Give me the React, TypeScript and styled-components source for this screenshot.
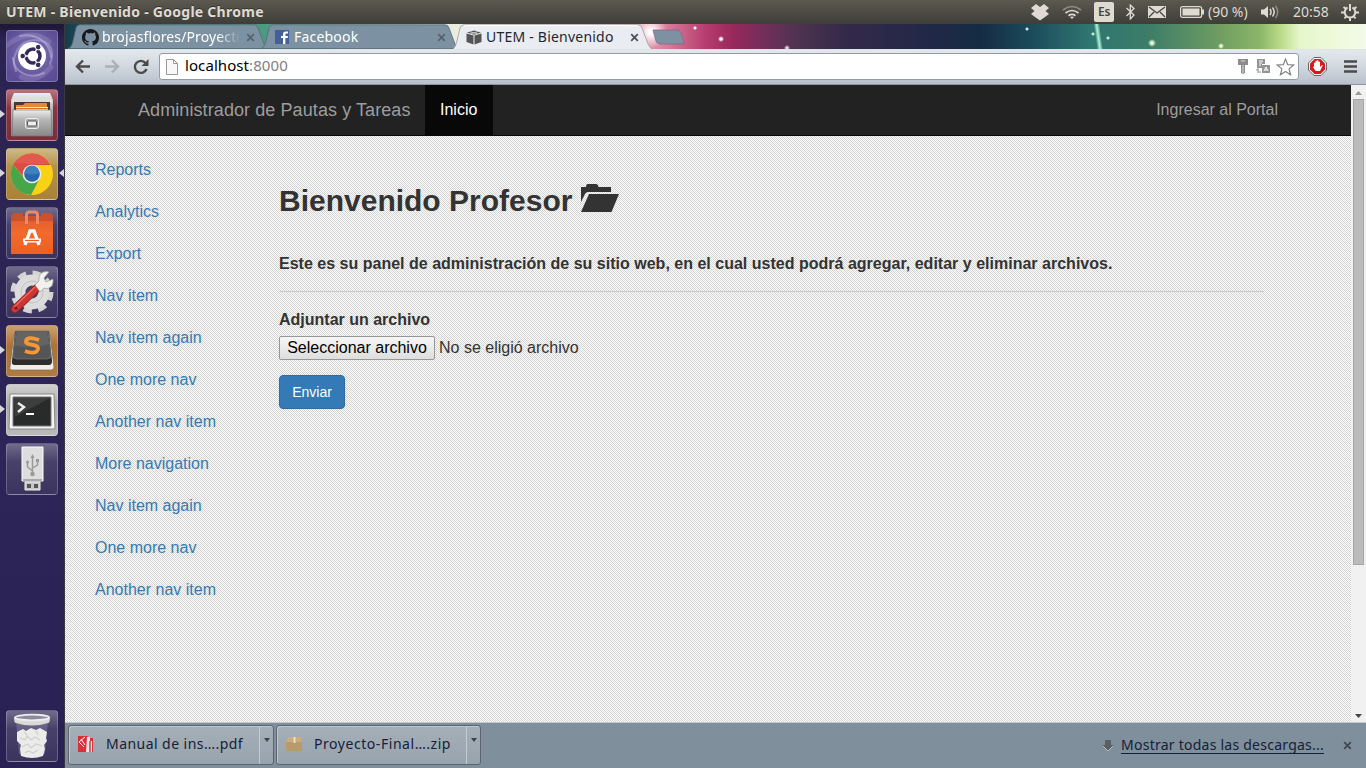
import React from "react";
import styled, { createGlobalStyle } from "styled-components";

const ui = `"Noto Sans", "Open Sans", sans-serif`;
const web = `"Liberation Sans", Arial, sans-serif`;

const Global = createGlobalStyle`
  * { box-sizing: border-box; }
  html, body, #root { margin: 0; height: 100%; }
  body { overflow: hidden; background: #2a2350; }
`;

const Desktop = styled.div`
  width: 1366px;
  height: 768px;
  display: flex;
  flex-direction: column;
  font-family: ${ui};
`;

const SystemBar = styled.header`
  height: 24px;
  flex: none;
  display: flex;
  justify-content: space-between;
  align-items: center;
  padding: 0 7px 0 6px;
  background: linear-gradient(#5c5a50, #55534a 20%, #3e3d38);
  color: #dfdbd2;
`;
const Label = styled.span<{ $size?: number; $space?: number; $w?: number }>`
  font-size: ${(p) => p.$size ?? 14}px;
  letter-spacing: ${(p) => p.$space ?? 0}px;
  ${(p) => (p.$w ? `width: ${p.$w}px;` : "")}
  line-height: 20px;
  white-space: nowrap;
  flex: none;
`;
const WindowTitle = styled(Label)`
  font-weight: 700;
  text-shadow: 0 -1px #33322e;
`;
const Indicators = styled.div`
  display: flex;
  align-items: center;
  height: 24px;
`;
const Indicator = styled.svg<{ $gap: number }>`
  display: block;
  flex: none;
  margin-right: ${(p) => p.$gap}px;
`;
const Keyboard = styled.span`
  width: 20px;
  height: 20px;
  margin-right: 12px;
  border-radius: 2px;
  background: #dfdbd2;
  color: #45443e;
  font-size: 12px;
  font-weight: 600;
  line-height: 20px;
  text-align: center;
  letter-spacing: -0.3px;
`;

const Workspace = styled.div`
  flex: 1;
  display: flex;
  min-height: 0;
`;

const Launcher = styled.nav`
  width: 65px;
  flex: none;
  display: flex;
  flex-direction: column;
  gap: 7px;
  padding: 6px 0 6px 6px;
  background: linear-gradient(#1f1738, #2b2350 16px, #2d2557 60%, #292154);
  border-right: 1px solid #3b3844;
`;
const Tile = styled.div<{ $bg: string; $last?: boolean }>`
  position: relative;
  width: 52px;
  height: 52px;
  flex: none;
  border-radius: 4px;
  border: 1px solid rgba(255, 255, 255, 0.22);
  background: ${(p) => p.$bg};
  ${(p) => (p.$last ? "margin-top: auto;" : "")}
  & > svg { display: block; }
`;
const Arrow = styled.i<{ $side: "left" | "right" }>`
  position: absolute;
  top: 20px;
  ${(p) => (p.$side === "left" ? "left: -7px;" : "right: -7px;")}
  border: 4px solid transparent;
  ${(p) =>
    p.$side === "left"
      ? "border-left: 5px solid #d8d6de; border-right: 0;"
      : "border-right: 5px solid #d8d6de; border-left: 0;"}
`;

const Browser = styled.main`
  flex: 1;
  min-width: 0;
  display: flex;
  flex-direction: column;
`;

const TabStrip = styled.div`
  height: 25px;
  flex: none;
  display: flex;
  padding-left: 3px;
  background:
    radial-gradient(circle at 586px 8px, #fff 0 2px, transparent 16px),
    radial-gradient(circle at 630px 4px, #fff 0 1px, transparent 2px),
    radial-gradient(circle at 656px 15px, #fff 0 1px, transparent 3px),
    radial-gradient(circle at 722px 24px, #e9cbe0 0 1px, transparent 3px),
    radial-gradient(circle at 1087px 19px, #eaffda 0 1px, transparent 4px),
    radial-gradient(circle at 962px 5px, #c5e8e4 0 1px, transparent 2px),
    radial-gradient(circle at 1028px 10px, #c5e8d4 0 1px, transparent 2px),
    radial-gradient(circle at 1043px 14px, #c5e8d4 0 1px, transparent 2px),
    radial-gradient(circle at 1156px 22px, #f0ffd8 0 1px, transparent 3px),
    linear-gradient(82deg, transparent 1022px, #7fd0b5 1024px, #b4f0d8 1025px, transparent 1028px),
    linear-gradient(90deg, #163c4c 0, #2f6f68 60px, #4c9a80 200px, #e8efdc 390px, #f4c9cf 540px, #dc87a2 596px, #b83d70 640px, #98285b 668px, #6b3059 705px, #4c3350 735px, #33294a 780px, #252848 850px, #142b43 915px, #1b4a5b 965px, #2f7670 1025px, #3d7d68 1085px, #6c9a62 1150px, #8cb668 1195px, #b9da86 1215px, #e6f7cc 1235px, #f4fbe9 1301px);
`;
const TabBox = styled.div<{ $w: number; $active?: boolean }>`
  position: relative;
  width: ${(p) => p.$w}px;
  height: 25px;
  margin-right: -8px;
  z-index: ${(p) => (p.$active ? 2 : 1)};
  display: flex;
  align-items: center;
  flex: none;
  padding: 1px 14px 0 14px;
  color: ${(p) => (p.$active ? "#1f2533" : "#fff")};
  & > * { position: relative; }
  & > svg:first-child { position: absolute; left: 0; top: 0; }
`;
const TabText = styled(Label)<{ $fade?: boolean; $lead: number }>`
  flex: 1 1 0;
  min-width: 0;
  overflow: hidden;
  margin-left: ${(p) => p.$lead}px;
  ${(p) => (p.$fade ? "mask-image: linear-gradient(90deg, #000 115px, transparent 138px);" : "")}
`;
const NewTab = styled.svg`
  display: block;
  margin: 5px 0 0 7px;
`;

const Toolbar = styled.div`
  height: 36px;
  flex: none;
  display: flex;
  align-items: center;
  padding: 0 7px 1px 10px;
  border-top: 1px solid #dfe4e8;
  border-bottom: 1px solid #8d949b;
  background: linear-gradient(#e4e8ed, #d3d9e1 45%, #b8c1cc);
`;
const ToolIcon = styled.svg<{ $gap?: number }>`
  display: block;
  flex: none;
  margin-right: ${(p) => p.$gap ?? 0}px;
`;
const BlockerIcon = styled(ToolIcon)`
  margin-left: 9px;
`;
const Omnibox = styled.div`
  width: 1140px;
  height: 27px;
  display: flex;
  align-items: center;
  padding: 0 3px 0 6px;
  border: 1px solid #939ba5;
  border-radius: 3px;
  background: #fff;
`;
const Address = styled(Label)`
  flex: 1;
  padding-bottom: 3px;
  color: #808080;
  & b { font-weight: 400; color: #000; }
`;

const Viewport = styled.div`
  flex: 1;
  min-height: 0;
  display: flex;
`;
const Page = styled.div`
  flex: 1;
  font-family: ${web};
  font-size: 16px;
  line-height: 22px;
  color: #333;
  background-color: #fff;
  background-image:
    conic-gradient(transparent 25%, rgba(255, 255, 255, 0.3) 0 50%, transparent 0 75%, rgba(255, 255, 255, 0.3) 0),
    conic-gradient(#fbfbfb 25%, #cfcfcf 0 50%, #fbfbfb 0 75%, #cfcfcf 0);
  background-size: 4px 4px, 2px 2px;
`;
const NavBar = styled.div`
  height: 51px;
  display: flex;
  align-items: stretch;
  padding: 0 58px;
  background: #222;
  border-bottom: 1px solid #080808;
  color: #9d9d9d;
`;
const Brand = styled.a`
  width: 302px;
  padding: 14px 0 14px 15px;
  font-size: 18px;
  letter-spacing: 0.085px;
  white-space: nowrap;
`;
const NavLink = styled.a<{ $active?: boolean }>`
  padding: 14px 15px;
  ${(p) => (p.$active ? "width: 68px; color: #fff; background: #080808;" : "margin-left: auto;")}
`;
const Columns = styled.div`
  display: flex;
`;
const SideNav = styled.ul`
  width: 199px;
  flex: none;
  margin: 0;
  padding: 13px 0 0 15px;
  list-style: none;
`;
const SideItem = styled.li`
  height: 42px;
  padding: 10px 15px;
  color: #337ab7;
  white-space: nowrap;
`;
const Content = styled.section`
  width: 1000px;
  padding: 48px 0 0 15px;
`;
const Heading = styled.h2`
  display: flex;
  margin: 0;
  height: 34px;
  font-size: 30px;
  line-height: 34px;
  font-weight: 700;
  & svg { margin-left: 9px; }
`;
const Intro = styled.p`
  margin: 35px 0 16px;
  font-weight: 700;
  letter-spacing: 0.01px;
`;
const Rule = styled.hr`
  margin: 0 0 17px;
  border: 0;
  border-top: 1px solid #c8c8c8;
`;
const FieldLabel = styled.label`
  display: block;
  font-weight: 700;
`;
const FileRow = styled.div`
  display: flex;
  align-items: center;
  margin: 5px 0 15px;
  gap: 4px;
`;
const FileButton = styled.button`
  width: 156px;
  height: 24px;
  padding: 0;
  font: 16px/20px ${web};
  color: #000;
  border: 1px solid #979797;
  border-radius: 2px;
  background: linear-gradient(#f6f6f6, #dedede);
`;
const Submit = styled.button`
  display: block;
  width: 66px;
  height: 34px;
  padding: 0;
  font: 14px/20px ${web};
  color: #fff;
  background: #337ab7;
  border: 1px solid #2e6da4;
  border-radius: 4px;
`;

const Scroll = styled.div`
  width: 15px;
  flex: none;
  display: flex;
  flex-direction: column;
  padding: 0 1px;
  background: #f1f1f1;
  & svg { display: block; }
`;
const Thumb = styled.div`
  height: 466px;
  margin: 0 1px auto;
  width: 11px;
  background: #bbb;
  border: 1px solid #a5a5a5;
`;

const Downloads = styled.footer`
  height: 46px;
  flex: none;
  display: flex;
  align-items: center;
  gap: 2px;
  padding: 0 14px 1px 3px;
  border-top: 1px solid #c5c9cc;
  background: #7f8f9b;
  color: #172038;
`;
const DownloadItem = styled.div<{ $w: number }>`
  width: ${(p) => p.$w}px;
  height: 40px;
  display: flex;
  border: 1px solid #5b6670;
  border-radius: 3px;
  background: linear-gradient(#a5afb8, #98a3ad);
  box-shadow: inset 1px 1px #bfc7ce;
`;
const DownloadMain = styled.div`
  flex: 1;
  display: flex;
  align-items: center;
  padding: 0 0 2px 9px;
  gap: 11px;
`;
const DownloadMenu = styled.div`
  width: 14px;
  padding: 12px 0 0 4px;
  border-left: 1px solid #c3cad0;
  & svg { display: block; }
`;
const ShowAll = styled(Label)`
  margin-left: 4px;
  border-bottom: 1px solid #172038;
  line-height: 16px;
`;
const DownloadArrow = styled.svg`
  display: block;
  margin-left: auto;
`;
const Dismiss = styled.span`
  margin-left: 17px;
  line-height: 0;
`;

const Close = ({ color }: { color: string }) => (
  <svg width="9" height="9" viewBox="0 0 9 9">
    <path d="M1.2 1.2 7.8 7.8M7.8 1.2 1.2 7.8" stroke={color} strokeWidth="1.8" />
  </svg>
);

type TabProps = { w: number; title: string; icon: React.ReactNode; active?: boolean; fade?: boolean; space?: number; lead?: number };
const Tab = ({ w, title, icon, active, fade, space, lead = 5 }: TabProps) => (
  <TabBox $w={w} $active={active}>
    <svg width={w} height="25">
      <path
        d={`M0 ${active ? 26 : 24.5}Q3 24 4.5 19L8 4Q9 .8 12 .8H${w - 15}Q${w - 12} .8 ${w - 11} 4L${w - 5} 20Q${w - 3} 24 ${w} ${active ? 26 : 24.5}Z`}
        fill={active ? "#e9edf1" : "#7c92a3"}
        stroke={active ? "#a4959f" : "#536976"}
        strokeWidth=".8"
      />
      {active && <path d={`M12 1.6H${w - 15}`} stroke="#fff" />}
    </svg>
    {icon}
    <TabText $fade={fade} $space={space} $lead={lead}>{title}</TabText>
    <Close color={active ? "#4d5157" : "#56636d"} />
  </TabBox>
);

const GitHubIcon = () => (
  <svg width="17" height="17" viewBox="0 0 16 16">
    <path fill="#17191c" d="M8 0C3.58 0 0 3.58 0 8c0 3.54 2.29 6.53 5.47 7.59.4.07.55-.17.55-.38v-1.49c-2.01.37-2.53-.49-2.69-.94-.09-.23-.48-.94-.82-1.13-.28-.15-.68-.52-.01-.53.63-.01 1.08.58 1.23.82.72 1.21 1.87.87 2.33.66.07-.52.28-.87.51-1.07-1.78-.2-3.64-.89-3.64-3.95 0-.87.31-1.59.82-2.15-.08-.2-.36-1.02.08-2.12 0 0 .67-.21 2.2.82a7.4 7.4 0 0 1 4 0c1.53-1.04 2.2-.82 2.2-.82.44 1.1.16 1.92.08 2.12.51.56.82 1.27.82 2.15 0 3.07-1.87 3.75-3.65 3.95.29.25.54.73.54 1.48v2.2c0 .21.15.46.55.38A8 8 0 0 0 16 8c0-4.42-3.58-8-8-8Z" />
  </svg>
);
const FacebookIcon = () => (
  <svg width="14" height="14" viewBox="0 0 14 14">
    <path fill="#43609c" d="M0 0h14v14H0z" />
    <path fill="#fff" d="M8 14V8H6V6h2V4.3C8 2.5 9 1.6 10.7 1.6H13v2h-1.5c-.9 0-1.1.4-1.1 1.1V6H13l-.3 2h-2.3v6z" />
  </svg>
);
const CubeIcon = () => (
  <svg width="16" height="15" viewBox="0 0 16 15">
    <path fill="#555" d="m.5 3.6 7 2v9L.5 12zM8.5 5.6l7-2V12l-7 2.6zM8 .5l7 2.1-7 2.2-7-2.2z" />
    <path d="m4 1.8 7.2 2M4.8 3.8 12 1.6" stroke="#ddd" strokeWidth=".8" />
  </svg>
);

const UbuntuIcon = () => (
  <svg width="50" height="50" viewBox="0 0 50 50">
    <g fill="none" stroke="#cdc5ea" strokeLinecap="round">
      <path d="M9 40C3 26 12 9 28 9s20 12 15 24" strokeWidth="2" opacity=".4" />
      <path d="M13 5c14-3 29 4 31 21M6 27c1 14 15 22 31 15" strokeWidth="2" opacity=".45" />
      <path d="M0 14Q24-4 42 11M14 46q15 7 30-10" strokeWidth="5" opacity=".2" />
    </g>
    <circle cx="25" cy="25" r="14" fill="#fff" />
    <circle cx="26" cy="25" r="7" fill="none" stroke="#342b59" strokeWidth="3.5" />
    <path d="m26 25-12 0M26 25l6-11M26 25l6 11" stroke="#fff" strokeWidth="1.5" />
    <g fill="#342b59" stroke="#fff"><circle cx="15.7" cy="25" r="2.8" /><circle cx="31.2" cy="16.1" r="2.8" /><circle cx="31.2" cy="33.9" r="2.8" /></g>
  </svg>
);
const FilesIcon = () => (
  <svg width="50" height="50" viewBox="0 0 50 50">
    <defs><linearGradient id="steel" x2="0" y2="1"><stop stopColor="#eee" /><stop offset=".35" stopColor="#b8b8b8" /><stop offset="1" stopColor="#888" /></linearGradient></defs>
    <path d="m7 3h36l3 7v36H4V10z" fill="url(#steel)" />
    <path d="M5 8h40v5H5z" fill="#ddd" /><path d="M7 12h36v10H7z" fill="#4a3930" />
    <path d="M9 15h7l2-2h22v9H9z" fill="#e98634" /><path d="M9 17h32v4H9z" fill="#f4e9d7" /><path d="M9 18h32v1H9z" fill="#da7123" />
    <path d="M6 20h38l1 26H5z" fill="url(#steel)" stroke="#777" strokeWidth=".7" />
    <rect x="18.5" y="28.5" width="13" height="10" rx="2" fill="#aaa" stroke="#eee" /><rect x="20.5" y="31" width="9" height="5" rx="1" fill="#eee" stroke="#555" />
  </svg>
);
const ChromeIcon = () => (
  <svg width="50" height="50" viewBox="0 0 50 50">
    <circle cx="25" cy="25" r="21" fill="#fbd116" />
    <path d="M6.2 15.5A21 21 0 0 1 43.600 16H25a9 9 0 0 0-8.4 12z" fill="#dc4b44" />
    <path d="M6.200 15.500A21 21 0 0 0 24 46l9-17A9 9 0 0 1 17 29z" fill="#48a64a" />
    <path d="M7.500 14Q16 1 33 6 41 9 43 15H24Z" fill="#ef7970" opacity=".3" />
    <circle cx="25" cy="25" r="9.300" fill="#eee" /><circle cx="25" cy="25" r="7.800" fill="#2468ad" /><path d="M17.500 24a7.500 7.500 0 0 1 15 0q-7.500 3-15 0" fill="#3f80c0" />
  </svg>
);
const SoftwareIcon = () => (
  <svg width="50" height="50" viewBox="0 0 50 50">
    <defs><linearGradient id="bag" x2="0" y2="1"><stop stopColor="#db5a31" /><stop offset=".5" stopColor="#f36a2c" /><stop offset="1" stopColor="#ee5f20" /></linearGradient></defs>
    <path d="M4 6l4-1h34l4 1v40H4z" fill="none" />
    <path d="M4 8l3-3h9v3h18V5h9l3 3v38H4z" fill="url(#bag)" />
    <path d="M4 8l3-3h9v3h18V5h9l3 3v5H4z" fill="#c9512f" />
    <path d="M19.500 16V7q0-3 3-3h5q3 0 3 3v9" fill="none" stroke="#ed8967" strokeWidth="3" />
    <path d="m18 37 5-14h4l5 14" fill="none" stroke="#fff" strokeWidth="3.300" /><path d="M16 32.500h18" stroke="#fff" strokeWidth="4" /><path d="M18 32.500h14" stroke="#ed5d21" strokeWidth="1.200" />
  </svg>
);
const SettingsIcon = () => (
  <svg width="50" height="50" viewBox="0 0 50 50">
    <circle cx="25" cy="25" r="17.500" fill="none" stroke="#d4d4d4" strokeWidth="8" strokeDasharray="7.750 6" />
    <circle cx="25" cy="25" r="12" fill="none" stroke="#dcdcdc" strokeWidth="11" />
    <circle cx="25" cy="25" r="11" fill="none" stroke="#c2c2c2" />
    <path d="M8 42 30 21" stroke="#942522" strokeWidth="8" strokeLinecap="round" /><path d="M8 42 30 21" stroke="#cf3631" strokeWidth="6.500" strokeLinecap="round" />
    <path d="M7 40 28 20" stroke="#eb6a5d" strokeWidth="1.500" />
    <path d="m28 18 4-4c-1-6 3-11 10-9l-5 6 2 4 7-3c1 7-4 11-9 9l-4 4z" fill="#f1f1ef" stroke="#999" strokeWidth=".7" />
    <circle cx="9" cy="41" r="1.500" fill="#642020" />
  </svg>
);
const SublimeIcon = () => (
  <svg width="50" height="50" viewBox="0 0 50 50">
    <path d="M7 9h36l4 32q0 3-3 3H6q-4 0-3-3z" fill="#f1eee8" stroke="#746d65" strokeWidth=".7" />
    <path d="M8 5h34l3 30q0 4-3 4H8q-4 0-3-4z" fill="#2d2d2d" /><path d="M9 5h32l3 24q0 4-4 4H10q-4 0-4-4z" fill="#555" stroke="#777" strokeWidth=".7" />
    <path d="M10 6h30l2 12Q24 24 8 19z" fill="#777" opacity=".45" />
    <path d="M32 14q-12-4-13 1c-1 5 13 2 12 8-1 5-8 4-13 2" fill="none" stroke="#fb9733" strokeWidth="3.800" />
  </svg>
);
const TerminalIcon = () => (
  <svg width="50" height="50" viewBox="0 0 50 50">
    <path d="M3 9h44l1 35H2z" fill="#f4f4f4" stroke="#888" /><path d="M6 12h38v29H6z" fill="#292b2b" stroke="#777" />
    <path d="M7 13h36L8 32z" fill="#3c3e3e" /><path d="m11 18 6 4-6 5" fill="none" stroke="#eee" strokeWidth="2.400" /><path d="M19 29h8" stroke="#fff" strokeWidth="2" />
  </svg>
);
const UsbIcon = () => (
  <svg width="50" height="50" viewBox="0 0 50 50">
    <path d="M15 3h21v34H15z" fill="#ddd" stroke="#fff" /><path d="M16 35h19v3H16z" fill="#aaa" />
    <path d="M18 38h15v8H18z" fill="#c5c5c5" stroke="#eee" /><path d="M20 40h4v4h-4zM27 40h4v4h-4z" fill="#555" />
    <path d="M25.500 29V13M25.500 27l-5-4v-5M25.500 24l5-3v-4" stroke="#999" strokeWidth="1.400" fill="none" /><circle cx="25.500" cy="30" r="2.200" fill="#999" /><path d="m25.500 10 2 4h-4z" fill="#999" /><circle cx="20.500" cy="18" r="1.500" fill="#999" /><path d="M29 15h3v3h-3z" fill="#999" />
  </svg>
);
const TrashIcon = () => (
  <svg width="50" height="50" viewBox="0 0 50 50">
    <path d="m9 9 3 34q13 6 26 0l3-34z" fill="#a8a4c0" opacity=".3" />
    <path d="m10 21 6-3 3 2 5-3 5 2 4-2 7 4-1 6 1 3-3 4 1 4-2 7q-11 4-22 0l-1-7 1-4-4-4z" fill="#ebebe9" />
    <path d="m13 27 5 2 2-4 4 4 4-3 5 3M15 36l6-3 3 4 5-4 6 2M18 42l3-2 5 2 5-3M29 20l2 4M17 21l3 3" fill="none" stroke="#cfcfcd" strokeWidth="1.200" />
    <path d="M7 6q0 6 2 6 16 5 32 0 2 0 2-6z" fill="#d9d9d5" />
    <ellipse cx="25" cy="6.500" rx="17" ry="2.800" fill="#8d899c" stroke="#eee" strokeWidth="1.800" />
  </svg>
);

const glass = "linear-gradient(#716c8d, #484169 35%, #3b345e)";
const apps = [
  { id: "dash", bg: "radial-gradient(circle at 50% 45%, #8579b9, #5c4d94 80%)", icon: <UbuntuIcon /> },
  { id: "files", bg: "linear-gradient(#b87480, #8c3540 35%, #7c2e3c)", icon: <FilesIcon />, left: true },
  { id: "chrome", bg: "linear-gradient(#cdb989, #b4924a 35%, #a98236)", icon: <ChromeIcon />, left: true, right: true },
  { id: "software", bg: glass, icon: <SoftwareIcon /> },
  { id: "settings", bg: glass, icon: <SettingsIcon /> },
  { id: "sublime", bg: "linear-gradient(#c9a071, #ad7231 40%, #b07a40)", icon: <SublimeIcon />, left: true },
  { id: "terminal", bg: "linear-gradient(#d0d0d0, #aaa 40%, #bababa)", icon: <TerminalIcon />, left: true },
  { id: "usb", bg: glass, icon: <UsbIcon /> },
  { id: "trash", bg: glass, icon: <TrashIcon />, last: true },
];

const links = ["Reports", "Analytics", "Export", "Nav item", "Nav item again", "One more nav", "Another nav item", "More navigation", "Nav item again", "One more nav", "Another nav item"];

const StatusIcons = () => (
  <Indicators>
    <Indicator $gap={12} width="20" height="18" viewBox="0 0 20 18" fill="#dfdbd2">
      <path d="m6 1 4 3 4-3 5 4-3.500 3L19 11l-4 3-5 3.500L5 14l-4-3 3.500-3L1 5z" />
    </Indicator>
    <Indicator $gap={12} width="20" height="15" viewBox="0 0 20 15" fill="none" stroke="#dfdbd2" strokeWidth="1.700">
      <path d="M1 5q9-7 18 0" opacity=".45" /><path d="M3.500 8q6.500-5 13 0M6.500 10.700q3.500-2.500 7 0" /><path d="m8 12 2 2 2-2q-2-1-4 0" fill="#dfdbd2" stroke="none" />
    </Indicator>
    <Keyboard>Es</Keyboard>
    <Indicator $gap={13} width="9" height="16" viewBox="0 0 9 16" fill="none" stroke="#dfdbd2" strokeWidth="1.300">
      <path d="m.5 4 7.500 7L4.300 15V1L8 4.500.5 12" />
    </Indicator>
    <Indicator $gap={14} width="18" height="12" viewBox="0 0 18 12">
      <path d="M0 0h18v12H0z" fill="#dfdbd2" /><path d="m1 1 8 6 8-6M1 11l5-5M17 11l-5-5" fill="none" stroke="#46453f" strokeWidth="1.300" />
    </Indicator>
    <Indicator $gap={4} width="24" height="12" viewBox="0 0 24 12">
      <rect x=".6" y=".6" width="21" height="10.800" rx="2" fill="none" stroke="#dfdbd2" strokeWidth="1.200" /><path d="M2.500 2.500h17v7h-17zM22 3.500h2v5h-2z" fill="#dfdbd2" />
    </Indicator>
    <Label $size={14} $w={52}>(90 %)</Label>
    <Indicator $gap={13} width="20" height="16" viewBox="0 0 20 16" fill="none" stroke="#dfdbd2" strokeWidth="1.500">
      <path d="M1 5.500h3L8 2v12l-4-3.500H1z" fill="#dfdbd2" stroke="none" /><path d="M10 5q2 3 0 6M12.500 3.500q3.500 4.500 0 9" /><path d="M15.500 2q4.500 6 0 12" opacity=".45" />
    </Indicator>
    <Label $size={14} $w={48}>20:58</Label>
    <Indicator $gap={0} width="18" height="18" viewBox="0 0 18 18" fill="none" stroke="#dfdbd2" strokeWidth="2">
      <path d="M6.500 4.500a5.300 5.300 0 1 0 5 0M9 1v7M2.500 4l2 1.500M15.500 4l-2 1.500M0 9.500h3M15 9.500h3M3.500 15.500l1.500-2M14.500 15.500l-1.500-2M9 15v3" />
    </Indicator>
  </Indicators>
);

const BrowserToolbar = () => (
  <Toolbar>
    <ToolIcon $gap={13} width="16" height="16" viewBox="0 0 16 16" fill="none" stroke="#4b4b4b" strokeWidth="2.400"><path d="M15 7.500H2M8 1.500l-6 6 6 6" /></ToolIcon>
    <ToolIcon $gap={13} width="16" height="16" viewBox="0 0 16 16" fill="none" stroke="#a9b0b6" strokeWidth="2.400"><path d="M1 7.500h13M8 1.500l6 6-6 6" /></ToolIcon>
    <ToolIcon $gap={10} width="16" height="16" viewBox="0 0 16 16"><path d="M13.500 10a6 6 0 1 1-1-6" fill="none" stroke="#4b4b4b" strokeWidth="2.400" /><path d="M15.500 0v7h-7z" fill="#4b4b4b" /></ToolIcon>
    <Omnibox>
      <ToolIcon $gap={7} width="12" height="16" viewBox="0 0 12 16"><path d="M.5.5h7l4 4v11H.5z" fill="#f8f8f8" stroke="#999" /><path d="M7.500.5v4h4" fill="none" stroke="#999" /></ToolIcon>
      <Address $size={15} $space={0.08}><b>localhost</b>:8000</Address>
      <ToolIcon $gap={8} width="10" height="15" viewBox="0 0 10 15"><path d="M0 0h10v6H7v8l-2 1-2-1V6H0z" fill="#8c8c8c" /><path d="M3 2h4M5 6v8" stroke="#ddd" /></ToolIcon>
      <ToolIcon $gap={5} width="15" height="15" viewBox="0 0 15 15">
        <path d="M1 0h8v5H6v4H1zM6 6h8v8H6z" fill="#949494" /><path d="M3 2h4M3 4h3M3 6h2M8 12l2-4 2 4M9 11h2" fill="none" stroke="#fff" /><path d="M0 11h3M2 9v5M2 13h3" stroke="#999" />
      </ToolIcon>
      <ToolIcon width="19" height="18" viewBox="0 0 19 18"><path d="m9.500 1 2.200 5.600 6 .4-4.600 3.900 1.500 5.900-5.100-3.300-5.100 3.300 1.500-5.900L1.300 7l6-.4z" fill="#fff" stroke="#858585" strokeWidth="1.200" /></ToolIcon>
    </Omnibox>
    <BlockerIcon $gap={17} width="19" height="19" viewBox="0 0 19 19">
      <path d="M6 .5h7L18.500 6v7L13 18.500H6L.5 13V6z" fill="#fff" stroke="#666" /><path d="M6.500 2h6L17 6.500v6L12.500 17h-6L2 12.500v-6z" fill="#d71920" />
      <path d="M6 10V6q.8-1 1.500 0V4q.8-1 1.500 0V3.500q.8-1 1.500 0V5q1-1 1.500 0v5l2-2q1 0 .5 1L12 14H7.500L5 10q0-1 1 0" fill="#fff" />
    </BlockerIcon>
    <ToolIcon width="13" height="13" viewBox="0 0 13 13" stroke="#4b4b4b" strokeWidth="2.500"><path d="M0 1.500h13M0 6.500h13M0 11.500h13" /></ToolIcon>
  </Toolbar>
);

const FolderOpen = () => (
  <svg width="38" height="28" viewBox="0 0 38 28" fill="#333">
    <path d="M0 18V3h5q0-3 2-3h8q2 0 2.500 3H30v5H7q-2 0-3 2z" /><path d="M8 10h30l-7.500 18H0z" />
  </svg>
);

const PdfIcon = () => (
  <svg width="17" height="16" viewBox="0 0 17 16"><path d="M0 0h9l3 2h3v14H0z" fill="#dc3038" /><path d="M9 1h3v4h2v11H8z" fill="#e8e4e1" /><path d="M1 6l6-5M1 6l5 5M3 3l4 6" stroke="#fff" /><path d="M12 5v11" stroke="#ba4444" strokeWidth="1.500" /></svg>
);
const BoxIcon = () => (
  <svg width="17" height="16" viewBox="0 0 17 16"><path d="M2 1h13l1 4v10H0V5z" fill="#b89b6d" /><path d="M2 1h13l1 5H0z" fill="#c9ae82" /><path d="M8.500 1v6" stroke="#eee0c5" strokeWidth="2" /></svg>
);
const Download = ({ w, name, icon, space }: { w: number; name: string; icon: React.ReactNode; space: number }) => (
  <DownloadItem $w={w}>
    <DownloadMain>{icon}<Label $space={space}>{name}</Label></DownloadMain>
    <DownloadMenu><svg width="6" height="4"><path d="M0 0h6L3 4z" fill="#39444d" /></svg></DownloadMenu>
  </DownloadItem>
);

export default function App() {
  return (
    <>
      <Global />
      <Desktop>
        <SystemBar>
          <WindowTitle $size={14} $space={0.27}>UTEM - Bienvenido - Google Chrome</WindowTitle>
          <StatusIcons />
        </SystemBar>
        <Workspace>
          <Launcher>
            {apps.map((a) => (
              <Tile key={a.id} $bg={a.bg} $last={a.last}>
                {a.icon}
                {a.left && <Arrow $side="left" />}
                {a.right && <Arrow $side="right" />}
              </Tile>
            ))}
          </Launcher>
          <Browser>
            <TabStrip>
              <Tab w={201} title="brojasflores/Proyecto" icon={<GitHubIcon />} fade lead={3} space={0.12} />
              <Tab w={199} title="Facebook" icon={<FacebookIcon />} space={0.2} />
              <Tab w={201} title="UTEM - Bienvenido" icon={<CubeIcon />} active lead={4} space={0.22} />
              <NewTab width="33" height="16"><path d="M1 1h24q3 0 4 3l3 11H8q-3 0-4-3z" fill="#7c92a3" stroke="#8c6681" strokeWidth=".8" /></NewTab>
            </TabStrip>
            <BrowserToolbar />
            <Viewport>
              <Page>
                <NavBar>
                  <Brand>Administrador de Pautas y Tareas</Brand>
                  <NavLink $active>Inicio</NavLink>
                  <NavLink>Ingresar al Portal</NavLink>
                </NavBar>
                <Columns>
                  <SideNav>{links.map((l, i) => <SideItem key={i}>{l}</SideItem>)}</SideNav>
                  <Content>
                    <Heading>Bienvenido Profesor <FolderOpen /></Heading>
                    <Intro>Este es su panel de administración de su sitio web, en el cual usted podrá agregar, editar y eliminar archivos.</Intro>
                    <Rule />
                    <FieldLabel>Adjuntar un archivo</FieldLabel>
                    <FileRow><FileButton>Seleccionar archivo</FileButton><span>No se eligió archivo</span></FileRow>
                    <Submit>Enviar</Submit>
                  </Content>
                </Columns>
              </Page>
              <Scroll>
                <svg width="13" height="14"><path d="M3 10h7L6.500 6z" fill="#999" /></svg>
                <Thumb />
                <svg width="13" height="14"><path d="M3 6h7L6.500 10z" fill="#444" /></svg>
              </Scroll>
            </Viewport>
            <Downloads>
              <Download w={206} name="Manual de ins….pdf" icon={<PdfIcon />} space={0.45} />
              <Download w={205} name="Proyecto-Final….zip" icon={<BoxIcon />} space={0.55} />
              <DownloadArrow width="13" height="13"><path d="M3 1h6v5h3l-6 6-6-6h3z" fill="#5c5f61" /><path d="m1 7 5 5 5-5" fill="none" stroke="#b6bdc2" /></DownloadArrow>
              <ShowAll $space={0.24}>Mostrar todas las descargas...</ShowAll>
              <Dismiss><Close color="#3f4850" /></Dismiss>
            </Downloads>
          </Browser>
        </Workspace>
      </Desktop>
    </>
  );
}
